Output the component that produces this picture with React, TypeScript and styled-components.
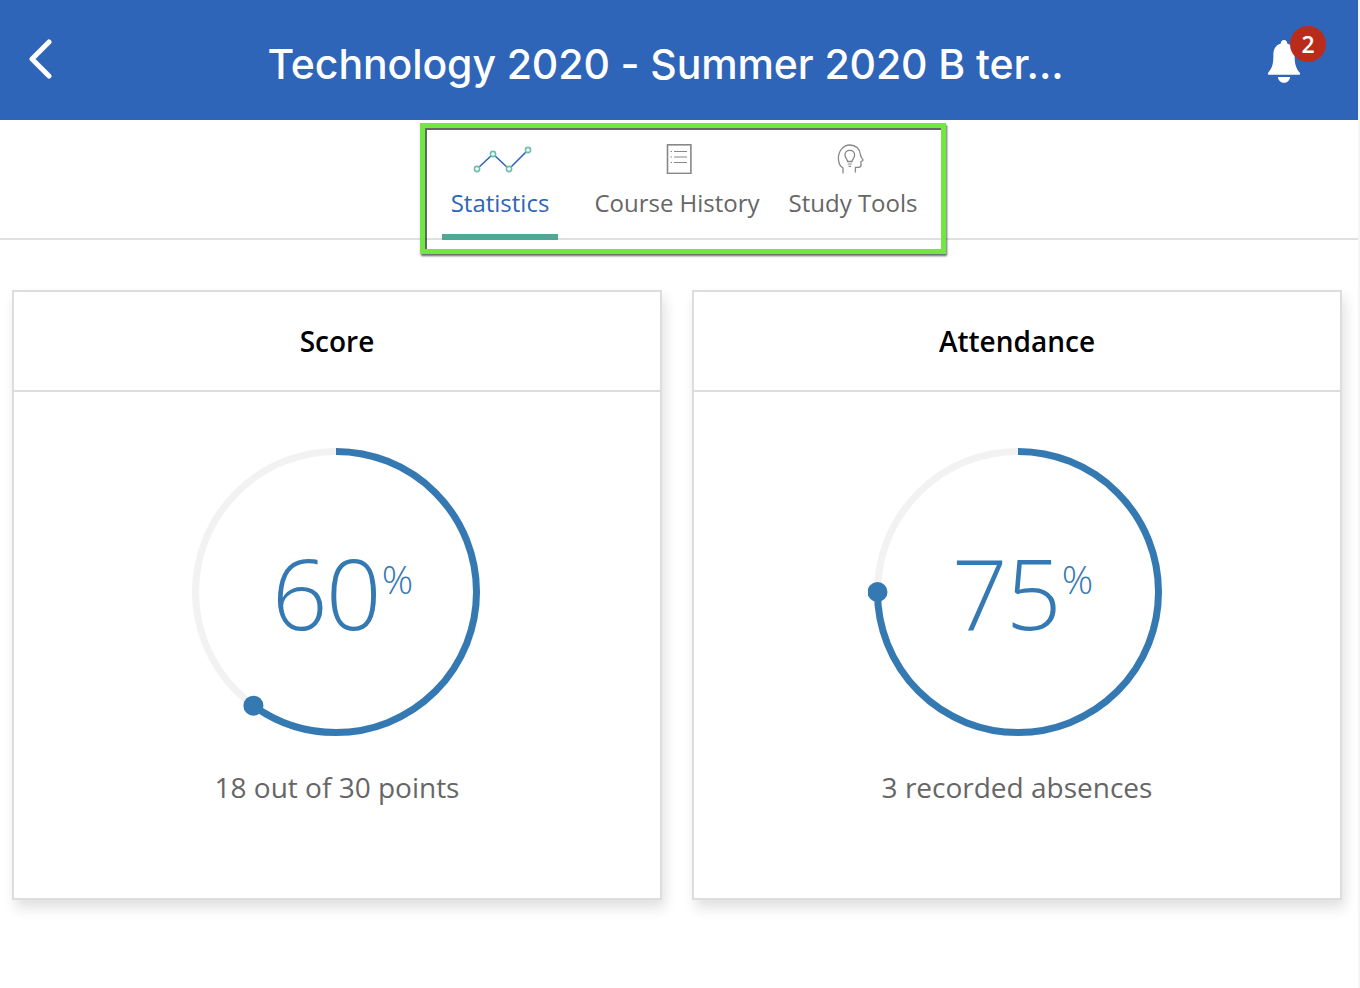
import React from 'react';
import styled, { createGlobalStyle } from 'styled-components';

const GlobalStyle = createGlobalStyle`
  html, body {
    margin: 0;
    padding: 0;
    background: #fff;
    font-family: "Open Sans", "Liberation Sans", sans-serif;
  }
`;

const Page = styled.div`
  width: 1360px;
  height: 988px;
  box-sizing: border-box;
  border-right: 2px solid #f5f5f5;
  overflow: hidden;
`;

const Header = styled.header`
  height: 120px;
  box-sizing: border-box;
  padding: 0 32px 0 29px;
  background: #2e65b8;
  display: flex;
  align-items: center;
`;

const BackButton = styled.div`
  width: 26px;
  height: 42px;
  color: #fff;
`;

const Title = styled.h1`
  flex: 1;
  margin: 8px 0 0 8px;
  font-family: Inter, "Liberation Sans", sans-serif;
  font-size: 41px;
  font-weight: 500;
  letter-spacing: -0.1px;
  line-height: 1;
  color: #fff;
  text-align: center;
  white-space: nowrap;
`;

const BellWrap = styled.div`
  position: relative;
  width: 58px;
  height: 56px;
  margin-top: -12px;
`;

const BellIcon = styled.svg`
  display: block;
  margin: 14px 0 0 -1px;
`;

const Badge = styled.span`
  position: absolute;
  top: 0;
  right: 0;
  width: 36px;
  height: 36px;
  border-radius: 50%;
  background: #b92c1c;
  color: #fff;
  font-size: 23px;
  font-weight: 600;
  line-height: 36px;
  text-align: center;
`;

const TabBar = styled.div`
  height: 120px;
  box-sizing: border-box;
  border-bottom: 2px solid #e0e0e0;
  display: flex;
  justify-content: center;
`;

const Tabs = styled.nav`
  position: relative;
  display: flex;
  margin-left: -6px;
`;

const Tab = styled.div<{ $active?: boolean; $width: number }>`
  width: ${p => p.$width}px;
  height: 120px;
  box-sizing: border-box;
  display: flex;
  flex-direction: column;
  align-items: center;
  padding-top: 24px;
  font-size: 24px;
  line-height: 34px;
  white-space: nowrap;
  color: ${p => (p.$active ? '#2e65b8' : '#666')};
  border-bottom: ${p => (p.$active ? '6px solid #4fa894' : 'none')};
`;

const TabIcon = styled.svg<{ $shift: number }>`
  display: block;
  margin: 0 0 12px ${p => p.$shift}px;
`;

const Highlight = styled.div`
  position: absolute;
  left: -22px;
  top: 3px;
  width: 526px;
  height: 131px;
  box-sizing: border-box;
  border: 5px solid #6fe844;
  box-shadow: 1px 2px 2px rgba(0, 0, 0, 0.6), inset 2px 2px 0 rgba(0, 0, 0, 0.6);
  pointer-events: none;
`;

const CardGrid = styled.main`
  display: grid;
  grid-template-columns: 650px 650px;
  gap: 30px;
  padding: 50px 0 0 12px;
`;

const Card = styled.section`
  height: 610px;
  box-sizing: border-box;
  border: 2px solid #ddd;
  background: #fff;
  box-shadow: 3px 8px 12px rgba(0, 0, 0, 0.12);
`;

const CardTitle = styled.h2`
  height: 100px;
  margin: 0;
  box-sizing: border-box;
  border-bottom: 2px solid #ddd;
  font-size: 28px;
  font-weight: 600;
  line-height: 98px;
  text-align: center;
  color: #000;
`;

const CardBody = styled.div`
  display: flex;
  flex-direction: column;
  align-items: center;
  padding-top: 50px;
`;

const RingWrap = styled.div<{ $nudge: number }>`
  position: relative;
  width: 300px;
  height: 300px;
  margin-left: ${p => p.$nudge}px;
`;

const RingValue = styled.div<{ $nudge: number }>`
  position: absolute;
  inset: 0;
  display: flex;
  align-items: center;
  justify-content: center;
  padding-left: ${p => 11 - p.$nudge}px;
  color: #3579b3;
  font-weight: 300;
`;

const Digits = styled.span`
  font-size: 98px;
  line-height: 1;
  letter-spacing: -2px;
`;

const Percent = styled.span`
  align-self: flex-start;
  margin: 117px 0 0 2px;
  font-size: 39px;
  line-height: 1;
`;

const Caption = styled.p`
  margin: 26px 0 0;
  font-size: 28px;
  line-height: 38px;
  color: #666;
`;

const RADIUS = 140.5;
const CENTER = 150;

const Ring = ({ value, nudge }: { value: number; nudge: number }) => {
  const angle = (value / 100) * 2 * Math.PI;
  const circumference = 2 * Math.PI * RADIUS;
  const dotX = CENTER + RADIUS * Math.sin(angle);
  const dotY = CENTER - RADIUS * Math.cos(angle);
  return (
    <RingWrap $nudge={nudge}>
      <svg width="300" height="300" viewBox="0 0 300 300">
        <circle cx={CENTER} cy={CENTER} r={RADIUS} fill="none" stroke="#f2f2f2" strokeWidth="7" />
        <circle
          cx={CENTER}
          cy={CENTER}
          r={RADIUS}
          fill="none"
          stroke="#3579b3"
          strokeWidth="7"
          strokeDasharray={`${circumference * value / 100} ${circumference}`}
          transform={`rotate(-90 ${CENTER} ${CENTER})`}
        />
        <circle cx={dotX} cy={dotY} r="10" fill="#3579b3" />
      </svg>
      <RingValue $nudge={nudge}>
        <Digits>{value}</Digits>
        <Percent>%</Percent>
      </RingValue>
    </RingWrap>
  );
};

const StatCard = ({ title, value, caption, nudge }: { title: string; value: number; caption: string; nudge: number }) => (
  <Card>
    <CardTitle>{title}</CardTitle>
    <CardBody>
      <Ring value={value} nudge={nudge} />
      <Caption>{caption}</Caption>
    </CardBody>
  </Card>
);

const ChartIcon = () => (
  <TabIcon $shift={6} width="60" height="30" viewBox="0 0 60 30">
    <polyline points="4,25 20,10 36,25 55,6" fill="none" stroke="#2e65b8" strokeWidth="1.6" />
    {[[4, 25], [20, 10], [36, 25], [55, 6]].map(([x, y]) => (
      <circle key={x} cx={x} cy={y} r="2.6" fill="#fff" stroke="#6cc0ab" strokeWidth="1.6" />
    ))}
  </TabIcon>
);

const ListIcon = () => (
  <TabIcon $shift={4} width="30" height="30" viewBox="0 0 30 30">
    <rect x="3.500" y="0.8" width="23.4" height="28.6" fill="none" stroke="#888" strokeWidth="1.6" />
    <path d="M10 7.500h13M10 13h13M10 18.500h13" stroke="#888" strokeWidth="1.2" />
    <path d="M6.500 7.500h1.500M6.500 13h1.500M6.500 18.500h1.500" stroke="#888" strokeWidth="1.2" />
  </TabIcon>
);

const HeadIcon = () => (
  <TabIcon $shift={-6} width="30" height="30" viewBox="0 0 30 30">
    <path
      d="M8 29.500v-5.500c-2.600-1.600-4.600-5-4.600-9.500C3.400 6.200 8.800 1 14.800 1c6.200 0 10.400 4.200 10.600 9.400.1 1.500.6 2.400 1.400 3.600l1 1.600c.4.700 0 1.200-.6 1.400l-1.200.4v3.600c0 1.400-1 2.300-2.400 2.300h-3.200v5.200"
      fill="none"
      stroke="#888"
      strokeWidth="1.3"
    />
    <path
      d="M12.600 17.500c0-2-2.600-3.200-2.600-6.600 0-2.700 2.200-4.600 4.800-4.600s4.800 1.900 4.800 4.600c0 3.400-2.600 4.600-2.600 6.600z"
      fill="none"
      stroke="#888"
      strokeWidth="1.3"
    />
    <path d="M12.800 20h4M13.600 22.400h2.400" stroke="#888" strokeWidth="1.2" />
  </TabIcon>
);

export default function App() {
  return (
    <Page>
      <GlobalStyle />
      <Header>
        <BackButton>
          <svg width="26" height="42" viewBox="0 0 26 42">
            <polyline points="20,3 3,20 20,37" fill="none" stroke="currentColor" strokeWidth="5" strokeLinecap="round" strokeLinejoin="round" />
          </svg>
        </BackButton>
        <Title>Technology 2020 - Summer 2020 B ter...</Title>
        <BellWrap>
          <BellIcon width="34" height="44" viewBox="0 0 34 44">
            <path
              d="M17 0c2 0 3.200 1.400 3.200 3.400 5 1.400 7.400 5.600 7.400 11 0 8 .6 13 5.200 18.400.6.8.4 2-.8 2H2c-1.200 0-1.400-1.200-.8-2 4.600-5.400 5.200-10.400 5.200-18.400 0-5.400 2.400-9.600 7.400-11C13.800 1.400 15 0 17 0z"
              fill="#fff"
            />
            <path d="M10.800 37h12.400c-.6 3.600-3.200 5.800-6.200 5.800s-5.600-2.200-6.200-5.800z" fill="#fff" />
          </BellIcon>
          <Badge>2</Badge>
        </BellWrap>
      </Header>
      <TabBar>
        <Tabs>
          <Tab $active $width={116}>
            <ChartIcon />
            Statistics
          </Tab>
          <Tab $width={238}>
            <ListIcon />
            Course History
          </Tab>
          <Tab $width={114}>
            <HeadIcon />
            Study Tools
          </Tab>
          <Highlight />
        </Tabs>
      </TabBar>
      <CardGrid>
        <StatCard title="Score" value={60} nudge={-2} caption="18 out of 30 points" />
        <StatCard title="Attendance" value={75} nudge={2} caption="3 recorded absences" />
      </CardGrid>
    </Page>
  );
}
